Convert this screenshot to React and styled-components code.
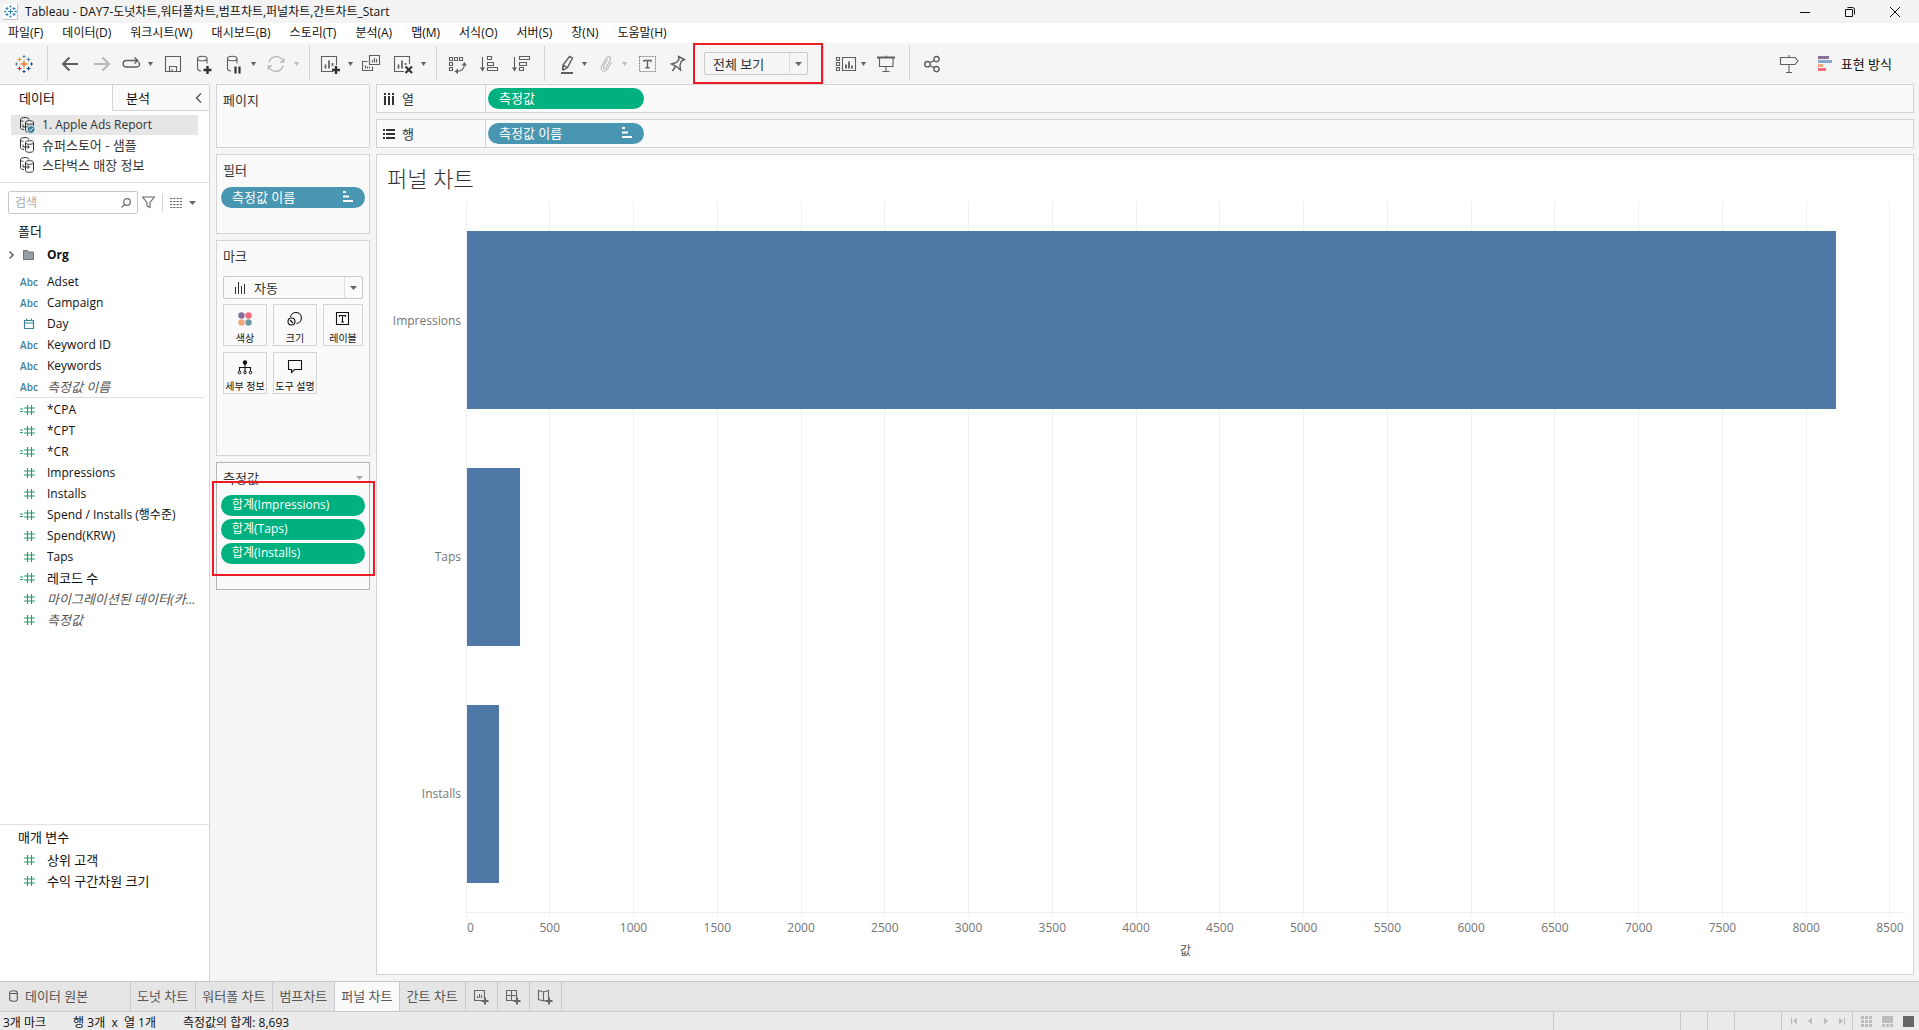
import React, { useState } from 'react';
import styled, { createGlobalStyle, css } from 'styled-components';

const GlobalStyle = createGlobalStyle`
  * {
    box-sizing: border-box;
  }
  body {
    margin: 0;
    background: #f5f5f5;
  }
  body, button, input, select {
    font-family: 'Open Sans', 'Noto Sans CJK KR', sans-serif;
    font-size: 13px;
    line-height: 20px;
    color: #333;
  }
  button {
    padding: 0;
    border: none;
    background: none;
    cursor: pointer;
  }
  svg {
    display: block;
    flex: none;
  }
  ul {
    margin: 0;
    padding: 0;
    list-style: none;
  }
`;

const Window = styled.div`
  display: flex;
  flex-direction: column;
  height: 100vh;
  overflow: hidden;
`;

// Title bar and menu
const TitleBar = styled.header`
  display: flex;
  align-items: center;
  justify-content: space-between;
  height: 23px;
  padding: 0 17px 0 3px;
  background: #f3f3f3;
  color: #111;
`;

const TitleText = styled.div`
  display: flex;
  align-items: center;
  gap: 7px;
  font-size: 12px;
  white-space: nowrap;
`;

const WindowButtons = styled.div`
  display: flex;
  gap: 31px;
`;

const MenuBar = styled.nav`
  display: flex;
  gap: 19px;
  height: 20px;
  padding-left: 8px;
  background: #fff;
`;

const MenuButton = styled.button`
  font-size: 12px;
  line-height: 20px;
  color: #111;
  white-space: nowrap;
`;

// Toolbar
const Toolbar = styled.div`
  display: flex;
  align-items: center;
  height: 41px;
  color: #5e5e5e;
`;

const ToolGroup = styled.div`
  display: flex;
  align-items: center;
  gap: ${({ $gap }) => $gap || 8}px;
  height: 35px;
  padding: 0 ${({ $end }) => $end || 9}px 0 ${({ $start }) => $start || 11}px;
  border-right: 1px solid ${({ $last }) => ($last ? 'transparent' : '#d4d4d4')};
`;

const ToolButton = styled.button`
  display: flex;
  width: 22px;
  height: 22px;
  color: ${({ disabled }) => (disabled ? '#b8b8b8' : '#5e5e5e')};
`;

const Split = styled.div`
  display: flex;
  align-items: center;
  gap: ${({ $tight }) => ($tight ? 2 : 5)}px;
`;

const CaretButton = styled.button`
  display: flex;
  justify-content: center;
  width: 8px;
  color: ${({ disabled }) => (disabled ? '#b8b8b8' : '#5e5e5e')};
`;

const SelectBox = styled.div`
  position: relative;
  display: flex;
  align-items: center;
  height: 23px;
  width: ${({ $wide }) => ($wide ? '100%' : '104px')};
  margin-left: ${({ $wide }) => ($wide ? 0 : 8)}px;
  border: 1px solid #c9c9c9;
  border-radius: 2px;
  color: #333;
`;

const Select = styled.select`
  flex: 1;
  min-width: 0;
  height: 21px;
  padding: 0 0 0 8px;
  border: none;
  outline: none;
  background: none;
  appearance: none;
`;

const SelectArrow = styled.span`
  display: flex;
  align-items: center;
  justify-content: center;
  width: 18px;
  height: 21px;
  border-left: 1px solid #ddd;
  color: #666;
  pointer-events: none;
`;

const Highlight = styled.div`
  position: absolute;
  inset: ${({ $inset }) => $inset};
  border: 2px solid #ed1c24;
  pointer-events: none;
`;

const ToolbarEnd = styled.div`
  display: flex;
  align-items: center;
  gap: 18px;
  margin-left: auto;
  padding-right: 27px;
`;

const ShowMe = styled.button`
  display: flex;
  align-items: center;
  gap: 9px;
  color: #111;
`;

// Main area
const Body = styled.div`
  display: flex;
  flex: 1;
  min-height: 0;
`;

const DataPane = styled.aside`
  display: flex;
  flex-direction: column;
  width: 210px;
  border-top: 1px solid #d4d4d4;
  border-right: 1px solid #d4d4d4;
  background: #fff;
`;

const PaneTabs = styled.div`
  display: flex;
  height: 26px;
  margin-bottom: 4px;
`;

const PaneTab = styled.button`
  display: flex;
  align-items: center;
  justify-content: space-between;
  color: #111;
  ${({ $active }) =>
    $active
      ? css`
          width: 112px;
          padding-left: 19px;
        `
      : css`
          flex: 1;
          padding: 0 5px 0 13px;
          border-left: 1px solid #d4d4d4;
          border-bottom: 1px solid #d4d4d4;
          background: #fafafa;
        `}
`;

const SourceList = styled.ul`
  padding: 0 11px 7px 11px;
`;

const SourceButton = styled.button`
  display: flex;
  align-items: center;
  gap: 7px;
  width: 100%;
  height: 20px;
  padding-left: 8px;
  background: ${({ $selected }) => ($selected ? '#e6e6e6' : 'none')};
  font-size: ${({ $selected }) => ($selected ? 12 : 13)}px;
`;

const SearchRow = styled.div`
  display: flex;
  align-items: center;
  gap: 4px;
  padding: 8px 13px 6px 8px;
  border-top: 1px solid #e0e0e0;
  color: #666;
`;

const SearchBox = styled.label`
  display: flex;
  align-items: center;
  flex: 1;
  min-width: 0;
  height: 23px;
  padding: 0 6px;
  border: 1px solid #c9c9c9;
  border-radius: 2px;
`;

const SearchInput = styled.input`
  flex: 1;
  min-width: 0;
  padding: 0;
  border: none;
  outline: none;
  font-size: 12px;
  &::placeholder {
    color: #aaa;
  }
`;

const SearchTools = styled.div`
  display: flex;
  align-items: center;
  gap: 7px;
`;

const SearchTool = styled.button`
  display: flex;
  color: ${({ $faint }) => ($faint ? '#aaa' : '#666')};
`;

const SearchDivider = styled.span`
  height: 18px;
  border-left: 1px solid #d4d4d4;
`;

const PaneHeading = styled.h2`
  margin: 0;
  padding-left: 18px;
  font-size: 13px;
  line-height: 22px;
  font-weight: 400;
  color: #111;
`;

const FolderButton = styled.button`
  display: flex;
  align-items: center;
  width: 100%;
  height: 26px;
  margin-bottom: 3px;
  padding-left: 8px;
  gap: 7px;
  font-size: 12px;
  font-weight: 700;
  color: #111;
  text-align: left;
`;

const FolderName = styled.span`
  padding-left: 6px;
`;

const FieldList = styled.ul`
  ${({ $divided }) =>
    $divided &&
    css`
      &::after {
        content: '';
        display: block;
        margin: 0 6px 1px 15px;
        border-bottom: 1px solid #dcdcdc;
      }
    `}
`;

const FieldButton = styled.button`
  display: flex;
  align-items: center;
  width: 100%;
  height: 21px;
  padding: 0 4px 0 19px;
  font-size: ${({ $korean }) => ($korean ? 13 : 12)}px;
  color: ${({ $italic }) => ($italic ? '#555' : '#111')};
  font-style: ${({ $italic }) => ($italic ? 'italic' : 'normal')};
`;

const FieldIcon = styled.span`
  display: flex;
  flex: none;
  justify-content: center;
  width: 20px;
  margin-right: 8px;
  font-size: 10px;
  font-weight: 600;
  font-style: normal;
  color: ${({ $measure }) => ($measure ? '#2e9b6f' : '#3f819b')};
`;

const FieldName = styled.span`
  white-space: nowrap;
`;

const Parameters = styled.section`
  height: 157px;
  margin-top: auto;
  padding-top: 1px;
  border-top: 1px solid #e0e0e0;
`;

const ParameterFields = styled.div`
  padding-top: 1px;
`;

// Cards
const Cards = styled.div`
  display: flex;
  flex-direction: column;
  gap: 6px;
  width: 154px;
  margin: 0 6px;
`;

const Card = styled.section`
  height: ${({ $height }) => $height}px;
  padding: 5px 4px;
  border: 1px solid ${({ $strong }) => ($strong ? '#b3b3b3' : '#d4d4d4')};
  background: #fafafa;
`;

const CardTitle = styled.h3`
  display: flex;
  align-items: center;
  justify-content: space-between;
  margin: 0;
  padding: 0 2px;
  font-size: 13px;
  line-height: 20px;
  font-weight: 400;
  color: #333;
`;

const PillList = styled.div`
  position: relative;
  display: flex;
  flex-direction: column;
  gap: 3px;
  margin-top: 7px;
`;

const PillButton = styled.button`
  display: flex;
  align-items: center;
  justify-content: space-between;
  width: ${({ $shelf }) => ($shelf ? '156px' : '100%')};
  height: 21px;
  padding: 0 12px 2px 11px;
  border-radius: 11px;
  background: ${({ $dimension }) => ($dimension ? '#4996b2' : '#00b180')};
  font-size: ${({ $latin }) => ($latin ? 12 : 13)}px;
  color: #fff;
`;

const MarkControls = styled.div`
  padding: 10px 2px 0;
`;

const MarkIcon = styled.span`
  padding-left: 10px;
`;

const MarkGrid = styled.div`
  display: grid;
  grid-template-columns: 44px 44px 40px;
  grid-auto-rows: 42px;
  gap: 6px;
  margin-top: 5px;
`;

const MarkButton = styled.button`
  display: flex;
  flex-direction: column;
  align-items: center;
  justify-content: space-between;
  padding-top: 5px;
  border: 1px solid #d4d4d4;
  font-size: 10px;
  line-height: 14px;
  color: #111;
  white-space: nowrap;
`;

// Shelves and view
const Workspace = styled.main`
  display: flex;
  flex-direction: column;
  flex: 1;
  gap: 6px;
  min-width: 0;
  padding: 0 5px 6px 0;
`;

const Shelf = styled.div`
  display: flex;
  align-items: center;
  height: 29px;
  border: 1px solid #d4d4d4;
  background: #fafafa;
`;

const ShelfLabel = styled.div`
  display: flex;
  align-items: center;
  gap: 7px;
  width: 109px;
  height: 27px;
  margin-right: 2px;
  padding-left: 6px;
  border-right: 1px solid #d4d4d4;
`;

const View = styled.section`
  display: flex;
  flex-direction: column;
  flex: 1;
  min-height: 0;
  border: 1px solid #d4d4d4;
  background: #fff;
`;

const ViewTitle = styled.h1`
  margin: 0;
  padding: 7px 10px;
  font-size: 22px;
  line-height: 32px;
  font-weight: 300;
  color: #333;
`;

const Chart = styled.div`
  display: grid;
  grid-template-columns: 89px 1fr;
  grid-template-rows: 1fr 62px;
  flex: 1;
  min-height: 0;
  padding-right: 8px;
`;

const RowLabels = styled.div`
  display: grid;
  grid-auto-rows: 1fr;
  align-items: center;
  padding: 2px 5px 0 0;
  font-size: 12px;
  text-align: right;
  color: #757575;
`;

const Plot = styled.svg`
  width: 100%;
  height: 100%;
  shape-rendering: crispEdges;
`;

const Axis = styled.svg`
  grid-column: 2;
  width: 100%;
  height: 62px;
  overflow: visible;
  font-size: 12px;
  shape-rendering: crispEdges;
`;

// Sheet tabs and status bar
const SheetTabs = styled.nav`
  display: flex;
  height: 30px;
  border-top: 1px solid #c9c9c9;
  background: #e5e5e5;
`;

const SheetTab = styled.button`
  display: flex;
  align-items: center;
  gap: 7px;
  width: ${({ $source }) => ($source ? '131px' : 'auto')};
  padding: 0 7px 2px ${({ $source }) => ($source ? 9 : 6)}px;
  border-right: 1px solid #c9c9c9;
  background: ${({ $active }) => ($active ? '#fafafa' : 'none')};
  color: #555;
  white-space: nowrap;
`;

const NewSheetButton = styled.button`
  display: flex;
  align-items: center;
  justify-content: center;
  width: 32px;
  border-right: 1px solid #c9c9c9;
  color: #666;
`;

const StatusBar = styled.footer`
  display: flex;
  align-items: center;
  height: 19px;
  border-top: 1px solid #c9c9c9;
  background: #ebebeb;
  font-size: 12px;
  color: #111;
  white-space: nowrap;
`;

const StatusText = styled.div`
  display: flex;
  gap: 27px;
  padding: 3px 0 0 3px;
`;

const StatusCells = styled.div`
  display: flex;
  align-items: center;
  height: 18px;
  margin-left: auto;
`;

const StatusCell = styled.div`
  display: flex;
  align-items: center;
  gap: ${({ $gap }) => $gap || 0}px;
  width: ${({ $width }) => $width}px;
  height: 18px;
  padding-left: 8px;
  border-left: 1px solid #c9c9c9;
`;

const StatusButton = styled.button`
  display: flex;
  color: #bdbdbd;
`;

// Icons
const Icon = ({ size = 22, width, children }) => (
  <svg
    width={width || size}
    height={size}
    viewBox={`0 0 ${width || size} ${size}`}
    fill="none"
    stroke="currentColor"
    strokeWidth="1.1"
    aria-hidden="true"
  >
    {children}
  </svg>
);

const Caret = () => (
  <svg width="7" height="4" viewBox="0 0 7 4" aria-hidden="true">
    <path d="M0 0h7L3.5 4z" fill="currentColor" />
  </svg>
);

const SmallCaret = () => (
  <svg width="5" height="4" viewBox="0 0 5 4" aria-hidden="true">
    <path d="M0 0h5L2.5 4z" fill="currentColor" />
  </svg>
);

const plus = (x, y, r) => `M${x - r} ${y}h${r * 2}M${x} ${y - r}v${r * 2}`;

const TableauMark = ({ colors }) => (
  <Icon size={22}>
    <path d={plus(11, 11, 3.5)} stroke={colors[0]} strokeWidth="1.5" />
    <path d={plus(6.5, 6.5, 2)} stroke={colors[1]} />
    <path d={plus(15.5, 6.5, 2)} stroke={colors[2]} />
    <path d={plus(6.5, 15.5, 2)} stroke={colors[3]} />
    <path d={plus(15.5, 15.5, 2)} stroke={colors[4]} />
    <path d={plus(11, 3.5, 1.5)} stroke={colors[2]} strokeWidth="1" />
    <path d={plus(11, 18.5, 1.5)} stroke={colors[4]} strokeWidth="1" />
    <path d={plus(3.5, 11, 1.5)} stroke={colors[2]} strokeWidth="1" />
    <path d={plus(18.5, 11, 1.5)} stroke={colors[4]} strokeWidth="1" />
  </Icon>
);

const AppMark = () => (
  <svg width="15" height="16" viewBox="0 0 15 16" aria-hidden="true">
    <rect x="0" y="0" width="15" height="16" fill="#fff" />
    <path d="M0 15.500h14.500V0" stroke="#c4c4c4" fill="none" />
    <path
      d="M5 7.500h5M7.500 5v5M2.500 4.500h3M4 3v3M9.500 4.500h3M11 3v3M2.500 10.500h3M4 9v3M9.500 10.500h3M11 9v3M6.500 2.500h2M7.500 1.500v2M6.500 12.500h2M7.500 11.500v2M1.500 7.500h2M2 6.500v2M11.500 7.500h2M13 6.500v2"
      stroke="#2c87b3"
      fill="none"
    />
  </svg>
);

const cylinder =
  'M5.500 5.500c0-1.400 2.200-2.300 4.800-2.300s4.700.9 4.700 2.300-2.100 2.300-4.700 2.300-4.800-.9-4.800-2.300zM5.500 5.500v10.200c0 1.300 1.500 2 3.500 2.300M15 5.500v5';

const icons = {
  back: <path d="M19 11H4M10.500 4.500L4 11l6.500 6.500" strokeWidth="2" />,
  forward: <path d="M5 11h15M13.500 4.500L20 11l-6.500 6.500" strokeWidth="2" />,
  redo: (
    <path
      d="M18 7.500H7.500c-4.500 0-4.500 6.500 0 6.500h10c3.500 0 4-3.500 1.800-4.800M15.500 4.500l3.300 3-3.300 3"
      strokeWidth="1.400"
    />
  ),
  save: <path d="M3.500 3.500h15v15h-15zM7.500 18.500v-5h7v5M10 18.500v-2.500" />,
  dbAdd: (
    <>
      <path d={cylinder} />
      <path d={plus(15.5, 17, 4)} stroke="#333" strokeWidth="2.400" />
    </>
  ),
  dbPause: (
    <>
      <path d={cylinder} />
      <path d="M13.500 13.500v7M17.500 13.500v7" stroke="#333" strokeWidth="2.200" />
    </>
  ),
  refresh: (
    <path
      d="M4 9.500A7.300 7.300 0 0 1 17.800 8M18 12.500A7.300 7.300 0 0 1 4.200 14M15 9h3.800V5M7 13H3.200v4"
      strokeWidth="1.300"
    />
  ),
  chartAdd: (
    <>
      <path d="M14 18.500H2.500v-15h15V12" />
      <path d="M6.500 15.500v-4M10 15.500v-8M13.500 13v-3" strokeWidth="1.700" />
      <path d={plus(17, 17, 4)} stroke="#333" strokeWidth="2.400" />
    </>
  ),
  duplicate: (
    <>
      <path d="M7.500 2.500h10v9h-10zM5.500 8.500h-5v9h10v-4" />
      <path d="M10.500 9.500V7M12.500 9.500V5M14.500 9.500V6M3.500 15.500v-3M5.500 15.500v-2M7.500 15.500v-2" />
    </>
  ),
  chartClear: (
    <>
      <path d="M12 18.500H2.500v-15h15V11" />
      <path d="M6.500 15.500v-4M10 15.500v-8M13.500 12v-2" strokeWidth="1.700" />
      <path d="M13.500 13.500l6.500 6.500M20 13.500l-6.500 6.500" stroke="#333" strokeWidth="2.200" />
    </>
  ),
  swap: (
    <>
      <path d="M3.500 4.500h3v3h-3zM8.500 4.500h3v3h-3zM13.500 4.500h3v3h-3zM3.500 9.500h3v3h-3zM3.500 14.500h3v3h-3zM18.500 11c0 4-2.500 7-7.500 7.500" />
      <path d="M15.500 12.500l3-3.500 2.500 3.500zM12 15.500L8.500 18.500l3.500 2.500z" fill="currentColor" stroke="none" />
    </>
  ),
  sortAsc: (
    <>
      <path d="M4.500 4v12M9.500 3.500h4v3h-4zM9.500 9.500h6v3h-6zM9.500 14.500h10v3h-10z" />
      <path d="M2 14.500h5l-2.500 4z" fill="currentColor" stroke="none" />
    </>
  ),
  sortDesc: (
    <>
      <path d="M4.500 4v12M9.500 3.500h10v3h-10zM9.500 9.500h7v3h-7zM9.500 14.500h4v3h-4z" />
      <path d="M2 14.500h5l-2.500 4z" fill="currentColor" stroke="none" />
    </>
  ),
  highlight: (
    <>
      <path
        d="M13.500 3.500l3 1.500-5 9.500-4 2.500-1-.5.500-4.500zM7 12l4 2.500M6.500 14.500l1.500 2"
        strokeWidth="1.400"
      />
      <path d="M5 20h12" strokeWidth="2" />
    </>
  ),
  clip: (
    <path
      d="M11.500 6L7.500 13.500c-.8 2 1.500 3 2.500 1.200L14 7.500c1.700-3.500-1.500-5.500-3.700-2.500L6 12.500c-2.500 4.500 2.500 8 5.500 3.500L15.500 9"
    />
  ),
  textBox: (
    <>
      <path d="M3.500 3.500h16v15h-16z" strokeDasharray="2 1" stroke="#888" />
      <path d="M8 9V7.500h7V9M11.500 7.500v7M9.500 14.700h4" strokeWidth="1.400" />
    </>
  ),
  pin: (
    <path
      d="M12.500 3.500l6 3-3 1.500-1.500 4 .5 5-4-3.500-5-2.500 5-1.500 2.500-3zM9.500 13.500l-3 4.500"
      strokeWidth="1.400"
    />
  ),
  cards: (
    <>
      <path d="M1.500 4.500h3v3h-3zM1.500 9.500h3v3h-3zM1.500 14.500h3v3h-3zM7.500 4.500h13v13h-13z" />
      <path d="M11 15.500v-4M14 15.500v-7M17 15.500v-3" strokeWidth="1.800" />
    </>
  ),
  present: (
    <>
      <path d="M2 4.500h18" strokeWidth="2" />
      <path d="M4.500 5v8.500h13.500V5M11 2.500v2M11 13.500v4.500M7.500 18.500h7" />
    </>
  ),
  share: (
    <path
      d="M6.500 8.500a2.700 2.700 0 1 0 0 5.400 2.700 2.700 0 0 0 0-5.400zM15.500 3.500a2.600 2.600 0 1 0 0 5.200 2.600 2.600 0 0 0 0-5.200zM15.500 13.500a2.600 2.600 0 1 0 0 5.200 2.600 2.600 0 0 0 0-5.200zM8.800 10l4.300-2.500M8.800 12.500l4.300 2.200"
      strokeWidth="1.400"
    />
  ),
};

const Tool = ({ name, label, disabled }) => (
  <ToolButton type="button" aria-label={label} disabled={disabled}>
    <Icon>{icons[name]}</Icon>
  </ToolButton>
);

const SplitTool = ({ name, label, disabled, tight, caretDisabled }) => (
  <Split $tight={tight}>
    <Tool name={name} label={label} disabled={disabled} />
    <CaretButton type="button" aria-label={`${label} 옵션`} disabled={caretDisabled}>
      <SmallCaret />
    </CaretButton>
  </Split>
);

const SourceIcon = ({ selected }) => (
  <Icon size={18} width={16}>
    <g strokeWidth="1">
      <path d="M5 13.500c-2.500-.2-3.500-.9-3.500-1.800V3.500C1.500 2.300 3.500 1.500 6 1.500s4 .8 4 2M1.500 3.500c0 1 1.300 1.700 3 1.900" />
      <path d="M6.500 6.500c0-1.200 1.700-1.800 4-1.800s4 .6 4 1.800-1.700 1.800-4 1.800-4-.6-4-1.800zM6.500 6.500v8c0 1.200 1.700 1.800 4 1.800s4-.6 4-1.800v-8" />
      <path d="M4 8.500v2.500h6M8.500 9.500l2 1.500-2 1.500" />
    </g>
    {selected && (
      <>
        <circle cx="12" cy="13.500" r="4" fill="#3a7f9c" stroke="#e6e6e6" strokeWidth="1" />
        <path d="M10.300 13.500l1.200 1.300 2.200-2.600" stroke="#fff" strokeWidth="1" />
      </>
    )}
  </Icon>
);

const SortMark = () => (
  <svg width="10" height="11" viewBox="0 0 10 11" aria-hidden="true">
    <path d="M0 1h3M0 5.500h6M0 10h10" stroke="#fff" strokeWidth="2" />
  </svg>
);

const NumberIcon = ({ calculated }) => (
  <Icon size={12} width={20}>
    <path d="M8.500 1v10M12.500 1v10M5 4h11M5 8h11" strokeWidth="1.200" />
    {calculated && <path d="M1 5h3M1 7.500h3" strokeWidth="1" />}
  </Icon>
);

const DateIcon = () => (
  <Icon size={12}>
    <path d="M1.500 2.500h9v8h-9zM1 5h10M3.500 0.500v2.500M8.500 0.500v2.500" strokeWidth="1.200" />
  </Icon>
);

const menus = [
  '파일(F)', '데이터(D)', '워크시트(W)', '대시보드(B)', '스토리(T)', '분석(A)',
  '맵(M)', '서식(O)', '서버(S)', '창(N)', '도움말(H)',
];

const sources = ['1. Apple Ads Report', '슈퍼스토어 - 샘플', '스타벅스 매장 정보'];

const dimensions = [
  { name: 'Adset', type: 'text' },
  { name: 'Campaign', type: 'text' },
  { name: 'Day', type: 'date' },
  { name: 'Keyword ID', type: 'text' },
  { name: 'Keywords', type: 'text' },
  { name: '측정값 이름', type: 'text', italic: true },
];

const measures = [
  { name: '*CPA', type: 'calc' },
  { name: '*CPT', type: 'calc' },
  { name: '*CR', type: 'calc' },
  { name: 'Impressions', type: 'number' },
  { name: 'Installs', type: 'number' },
  { name: 'Spend / Installs (행수준)', type: 'calc' },
  { name: 'Spend(KRW)', type: 'number' },
  { name: 'Taps', type: 'number' },
  { name: '레코드 수', type: 'calc' },
  { name: '마이그레이션된 데이터(카...', type: 'number', italic: true },
  { name: '측정값', type: 'number', italic: true },
];

const parameters = [
  { name: '상위 고객', type: 'number' },
  { name: '수익 구간차원 크기', type: 'number' },
];

const sheets = ['도넛 차트', '워터폴 차트', '범프차트', '퍼널 차트', '간트 차트'];

const funnel = [
  { name: 'Impressions', value: 8173 },
  { name: 'Taps', value: 318 },
  { name: 'Installs', value: 192 },
];

const AXIS_MAX = 8590;
const ticks = Array.from({ length: 18 }, (_, i) => i * 500);
const toPercent = (value) => `${(value / AXIS_MAX) * 100}%`;

const Fields = ({ items, divided }) => (
  <FieldList $divided={divided}>
    {items.map(({ name, type, italic }) => (
      <li key={name}>
        <FieldButton type="button" $italic={italic} $korean={!/[a-z]/i.test(name)}>
          <FieldIcon $measure={type === 'number' || type === 'calc'}>
            {type === 'text' && 'Abc'}
            {type === 'date' && <DateIcon />}
            {type === 'number' && <NumberIcon />}
            {type === 'calc' && <NumberIcon calculated />}
          </FieldIcon>
          <FieldName>{name}</FieldName>
        </FieldButton>
      </li>
    ))}
  </FieldList>
);

const Pill = ({ children, dimension, shelf, latin }) => (
  <PillButton type="button" $dimension={dimension} $shelf={shelf} $latin={latin}>
    {children}
    {dimension && <SortMark />}
  </PillButton>
);

const markButtons = [
  {
    label: '색상',
    icon: (
      <g stroke="none">
        <circle cx="7.500" cy="5.500" r="3.200" fill="#86709a" />
        <circle cx="14.500" cy="5.500" r="3.200" fill="#fb6a7c" />
        <circle cx="7.500" cy="12.500" r="3.200" fill="#f5a57c" />
        <circle cx="14.500" cy="12.500" r="3.200" fill="#6f99a5" />
      </g>
    ),
  },
  {
    label: '크기',
    icon: (
      <>
        <path d="M6.500 7a5.500 5.500 0 1 1 6 6.500" />
        <circle cx="7.500" cy="11.500" r="3.500" />
        <path d="M6 10l3 3" />
      </>
    ),
  },
  {
    label: '레이블',
    icon: (
      <>
        <path d="M4.500 2.500h12v12h-12z" />
        <path d="M7.500 7V5.500h6V7M10.500 5.500v6.500M9 12h3" />
      </>
    ),
  },
  {
    label: '세부 정보',
    icon: (
      <>
        <circle cx="11" cy="4.500" r="2.200" fill="currentColor" stroke="none" />
        <path d="M11 5v9M5.500 13.500v-4h11v4" />
        <circle cx="5.500" cy="14.500" r="1.300" fill="#fafafa" strokeWidth="1" />
        <circle cx="11" cy="14.500" r="1.300" fill="#fafafa" strokeWidth="1" />
        <circle cx="16.500" cy="14.500" r="1.300" fill="#fafafa" strokeWidth="1" />
      </>
    ),
  },
  {
    label: '도구 설명',
    icon: <path d="M4.500 2.500h13v9h-7l-3 3v-3h-3z" />,
  },
];

const FunnelChart = () => (
  <Chart>
    <RowLabels>
      {funnel.map(({ name }) => (
        <span key={name}>{name}</span>
      ))}
    </RowLabels>
    <Plot role="img" aria-label="퍼널 차트">
      {ticks.map((tick) => (
        <line key={tick} x1={toPercent(tick)} x2={toPercent(tick)} y1="0" y2="100%" stroke="#f0f0f0" />
      ))}
      {funnel.map(({ name, value }, i) => (
        <rect
          key={name}
          x="1"
          y={`${((i + 0.127) / funnel.length) * 100}%`}
          width={toPercent(value)}
          height={`${75 / funnel.length}%`}
          fill="#4e79a7"
        />
      ))}
    </Plot>
    <Axis>
      <line x1="0" x2="100%" y1="0.5" y2="0.5" stroke="#f0f0f0" />
      {ticks.map((tick) => (
        <React.Fragment key={tick}>
          <line x1={toPercent(tick)} x2={toPercent(tick)} y1="0" y2="5" stroke="#f0f0f0" />
          <text
            x={tick === 0 ? 1 : toPercent(tick)}
            y="20"
            textAnchor={tick === 0 ? 'start' : 'middle'}
            fill="#757575"
          >
            {tick}
          </text>
        </React.Fragment>
      ))}
      <text x="50%" y="43" textAnchor="middle" fill="#555">값</text>
    </Axis>
  </Chart>
);

const App = () => {
  const [search, setSearch] = useState('');
  const [activeSheet, setActiveSheet] = useState('퍼널 차트');

  return (
    <Window>
      <GlobalStyle />
      <TitleBar>
        <TitleText>
          <AppMark />
          Tableau - DAY7-도넛차트,워터폴차트,범프차트,퍼널차트,간트차트_Start
        </TitleText>
        <WindowButtons>
          <button type="button" aria-label="최소화">
            <Icon size={14}><path d="M2 7.500h10" stroke="#111" strokeWidth="1" /></Icon>
          </button>
          <button type="button" aria-label="이전 크기로">
            <Icon size={14}>
              <path d="M2.500 4.500h7v7h-7zM4.500 2.500h5q2 0 2 2v5" stroke="#111" strokeWidth="1" />
            </Icon>
          </button>
          <button type="button" aria-label="닫기">
            <Icon size={14}><path d="M2 2l10 10M12 2L2 12" stroke="#111" strokeWidth="1" /></Icon>
          </button>
        </WindowButtons>
      </TitleBar>

      <MenuBar>
        {menus.map((menu) => (
          <MenuButton key={menu} type="button">{menu}</MenuButton>
        ))}
      </MenuBar>

      <Toolbar>
        <ToolGroup $start={13} $end={12}>
          <ToolButton type="button" aria-label="시작 페이지">
            <TableauMark colors={['#e8762c', '#eb912b', '#5b879b', '#c72035', '#1f457e']} />
          </ToolButton>
        </ToolGroup>
        <ToolGroup>
          <Tool name="back" label="실행 취소" />
          <Tool name="forward" label="다시 실행" disabled />
          <SplitTool name="redo" label="재생" />
          <Tool name="save" label="저장" />
          <Tool name="dbAdd" label="새 데이터 원본" />
          <SplitTool name="dbPause" label="자동 업데이트 일시 중지" />
          <SplitTool name="refresh" label="새로 고침" disabled caretDisabled />
        </ToolGroup>
        <ToolGroup $start={9}>
          <SplitTool name="chartAdd" label="새 워크시트" />
          <Tool name="duplicate" label="복제" />
          <SplitTool name="chartClear" label="시트 지우기" />
        </ToolGroup>
        <ToolGroup $start={9} $end={12} $gap={10}>
          <Tool name="swap" label="행과 열 바꾸기" />
          <Tool name="sortAsc" label="오름차순 정렬" />
          <Tool name="sortDesc" label="내림차순 정렬" />
        </ToolGroup>
        <ToolGroup $end={15}>
          <SplitTool name="highlight" label="하이라이트" tight />
          <SplitTool name="clip" label="그룹" tight disabled caretDisabled />
          <Tool name="textBox" label="마크 레이블 표시" />
          <Tool name="pin" label="축 고정" />
          <SelectBox>
            <Select aria-label="맞춤" defaultValue="전체 보기">
              <option>표준</option>
              <option>전체 보기</option>
            </Select>
            <SelectArrow><Caret /></SelectArrow>
            <Highlight $inset="-10px -16px -10px -12px" />
          </SelectBox>
        </ToolGroup>
        <ToolGroup $end={12}>
          <SplitTool name="cards" label="카드 표시" tight />
          <Tool name="present" label="프레젠테이션 모드" />
        </ToolGroup>
        <ToolGroup $last>
          <Tool name="share" label="공유" />
        </ToolGroup>
        <ToolbarEnd>
          <ToolButton type="button" aria-label="가이드">
            <Icon>
              <path d="M2.500 4.500h14.500l3 3.500-3 3.500H2.500zM11 2v2.500M11 11.500v8M8 19.500h6" />
            </Icon>
          </ToolButton>
          <ShowMe type="button">
            <svg width="14" height="16" viewBox="0 0 14 16" aria-hidden="true">
              <path d="M0 0h11v3H0z" fill="#86709a" />
              <path d="M0 4h14v3H0z" fill="#84a9cd" />
              <path d="M0 8h5v3H0z" fill="#f5a57c" />
              <path d="M0 12h8v3H0z" fill="#fb6a7c" />
            </svg>
            표현 방식
          </ShowMe>
        </ToolbarEnd>
      </Toolbar>

      <Body>
        <DataPane>
          <PaneTabs>
            <PaneTab type="button" $active>데이터</PaneTab>
            <PaneTab type="button">
              분석
              <Icon size={10}><path d="M7 0.500L2.500 5 7 9.500" stroke="#555" strokeWidth="1.400" /></Icon>
            </PaneTab>
          </PaneTabs>
          <SourceList>
            {sources.map((source, i) => (
              <li key={source}>
                <SourceButton type="button" $selected={i === 0}>
                  <SourceIcon selected={i === 0} />
                  {source}
                </SourceButton>
              </li>
            ))}
          </SourceList>
          <SearchRow>
            <SearchBox>
              <SearchInput
                type="text"
                aria-label="검색"
                placeholder="검색"
                value={search}
                onChange={(event) => setSearch(event.target.value)}
              />
              <Icon size={10}>
                <circle cx="6" cy="4" r="3.300" strokeWidth="1.200" />
                <path d="M3.700 6.300L0.500 9.500" strokeWidth="1.200" />
              </Icon>
            </SearchBox>
            <SearchTools>
              <SearchTool type="button" aria-label="필터">
                <Icon size={13}><path d="M0.500 1h12L8 6.500v5l-3-1.500V6.500z" /></Icon>
              </SearchTool>
              <SearchDivider />
              <SearchTool type="button" aria-label="보기">
                <Icon size={12}>
                  <path
                    d="M0 1.500h12M0 4.500h12M0 7.500h12M0 10.500h12"
                    strokeDasharray="2.250 1"
                    strokeWidth="1.200"
                  />
                </Icon>
              </SearchTool>
              <SearchTool type="button" aria-label="보기 옵션"><Caret /></SearchTool>
            </SearchTools>
          </SearchRow>
          <PaneHeading>폴더</PaneHeading>
          <FolderButton type="button">
            <Icon size={8}>
              <path d="M1.500 0.500L5 4 1.500 7.500" stroke="#555" strokeWidth="1.400" />
            </Icon>
            <svg width="11" height="10" viewBox="0 0 11 10" aria-hidden="true">
              <path d="M0.500 0.500h4l1 1.500h5v7.500h-10z" fill="#969da5" stroke="#6d747c" />
            </svg>
            <FolderName>Org</FolderName>
          </FolderButton>
          <Fields items={dimensions} divided />
          <Fields items={measures} />
          <Parameters>
            <PaneHeading>매개 변수</PaneHeading>
            <ParameterFields>
              <Fields items={parameters} />
            </ParameterFields>
          </Parameters>
        </DataPane>

        <Cards>
          <Card $height={64}>
            <CardTitle>페이지</CardTitle>
          </Card>
          <Card $height={80}>
            <CardTitle>필터</CardTitle>
            <PillList>
              <Pill dimension>측정값 이름</Pill>
            </PillList>
          </Card>
          <Card $height={216}>
            <CardTitle>마크</CardTitle>
            <MarkControls>
              <SelectBox $wide>
                <MarkIcon>
                  <Icon size={12}><path d="M1.500 5v7M4.500 0v12M7.500 4v8M10.500 2v10" strokeWidth="1" /></Icon>
                </MarkIcon>
                <Select aria-label="마크 유형" defaultValue="자동">
                  <option>자동</option>
                  <option>막대</option>
                </Select>
                <SelectArrow><Caret /></SelectArrow>
              </SelectBox>
              <MarkGrid>
                {markButtons.map(({ label, icon }) => (
                  <MarkButton key={label} type="button">
                    <Icon size={18} width={22}>{icon}</Icon>
                    {label}
                  </MarkButton>
                ))}
              </MarkGrid>
            </MarkControls>
          </Card>
          <Card $height={128} $strong>
            <CardTitle>
              측정값
              <SearchTool type="button" aria-label="측정값 옵션" $faint><Caret /></SearchTool>
            </CardTitle>
            <PillList>
              <Pill latin>합계(Impressions)</Pill>
              <Pill latin>합계(Taps)</Pill>
              <Pill latin>합계(Installs)</Pill>
              <Highlight $inset="-14px -10px -12px -9px" />
            </PillList>
          </Card>
        </Cards>

        <Workspace>
          <Shelf>
            <ShelfLabel>
              <Icon size={12}>
                <path d="M2 0v2M6 0v2M10 0v2M2 3v9M6 3v9M10 3v9" strokeWidth="2" />
              </Icon>
              열
            </ShelfLabel>
            <Pill shelf>측정값</Pill>
          </Shelf>
          <Shelf>
            <ShelfLabel>
              <Icon size={12}>
                <path d="M0 2h2M0 6h2M0 10h2M3 2h9M3 6h9M3 10h9" strokeWidth="2" />
              </Icon>
              행
            </ShelfLabel>
            <Pill shelf dimension>측정값 이름</Pill>
          </Shelf>
          <View>
            <ViewTitle>퍼널 차트</ViewTitle>
            <FunnelChart />
          </View>
        </Workspace>
      </Body>

      <SheetTabs>
        <SheetTab type="button" $source>
          <Icon size={12} width={9}>
            <path d="M0.700 2.500c0-2.400 7.600-2.400 7.600 0v7c0 2.400-7.600 2.400-7.600 0zM0.700 3.500h7.600" />
          </Icon>
          데이터 원본
        </SheetTab>
        {sheets.map((sheet) => (
          <SheetTab
            key={sheet}
            type="button"
            $active={sheet === activeSheet}
            onClick={() => setActiveSheet(sheet)}
          >
            {sheet}
          </SheetTab>
        ))}
        <NewSheetButton type="button" aria-label="새 워크시트">
          <Icon size={16}>
            <path d="M9 11.500H1.500v-10h10V9M4.500 9V7M6.500 9V5M8.500 9V6" />
            <path d={plus(12, 12, 3.5)} strokeWidth="2" />
          </Icon>
        </NewSheetButton>
        <NewSheetButton type="button" aria-label="새 대시보드">
          <Icon size={16}>
            <path d="M9 11.500H1.500v-10h10V9M1.500 6.500h10M6.500 1.500v10" />
            <path d={plus(12, 12, 3.5)} strokeWidth="2" />
          </Icon>
        </NewSheetButton>
        <NewSheetButton type="button" aria-label="새 스토리">
          <Icon size={16}>
            <path d="M9 11.500l-2.500.5-5-1.500v-9L6.500 3l5-1.500V9M6.500 3v9" />
            <path d={plus(12, 12, 3.5)} strokeWidth="2" />
          </Icon>
        </NewSheetButton>
      </SheetTabs>

      <StatusBar>
        <StatusText>
          <span>3개 마크</span>
          <span>행 3개&nbsp; x&nbsp; 열 1개</span>
          <span>측정값의 합계: 8,693</span>
        </StatusText>
        <StatusCells>
          <StatusCell $width={127} />
          <StatusCell $width={27} />
          <StatusCell $width={27} />
          <StatusCell $width={47} />
          <StatusCell $width={71} $gap={8}>
            <StatusButton type="button" aria-label="처음">
              <Icon size={8}><path d="M1.500 0.500v7" /><path d="M7 0.500v7L3 4z" fill="currentColor" stroke="none" /></Icon>
            </StatusButton>
            <StatusButton type="button" aria-label="이전">
              <Icon size={8}><path d="M6 0.500v7L2 4z" fill="currentColor" stroke="none" /></Icon>
            </StatusButton>
            <StatusButton type="button" aria-label="다음">
              <Icon size={8}><path d="M2 0.500v7L6 4z" fill="currentColor" stroke="none" /></Icon>
            </StatusButton>
            <StatusButton type="button" aria-label="마지막">
              <Icon size={8}><path d="M6.500 0.500v7" /><path d="M1 0.500v7L5 4z" fill="currentColor" stroke="none" /></Icon>
            </StatusButton>
          </StatusCell>
          <StatusCell $width={67} $gap={10}>
            <StatusButton type="button" aria-label="시트 정렬">
              <Icon size={11}>
                <path d="M0 1.500h11M0 5.500h11M0 9.500h11" strokeWidth="3" strokeDasharray="3 1" />
              </Icon>
            </StatusButton>
            <StatusButton type="button" aria-label="필름 스트립">
              <Icon size={11}>
                <path d="M0 3.500h11" strokeWidth="7" />
                <path d="M0 9.500h11" strokeWidth="3" strokeDasharray="3 1" />
              </Icon>
            </StatusButton>
            <StatusButton type="button" aria-label="시트 탭 표시">
              <Icon size={11}><path d="M0 0h11v11H0z" fill="#666" stroke="none" /></Icon>
            </StatusButton>
          </StatusCell>
        </StatusCells>
      </StatusBar>
    </Window>
  );
};

export default App;
